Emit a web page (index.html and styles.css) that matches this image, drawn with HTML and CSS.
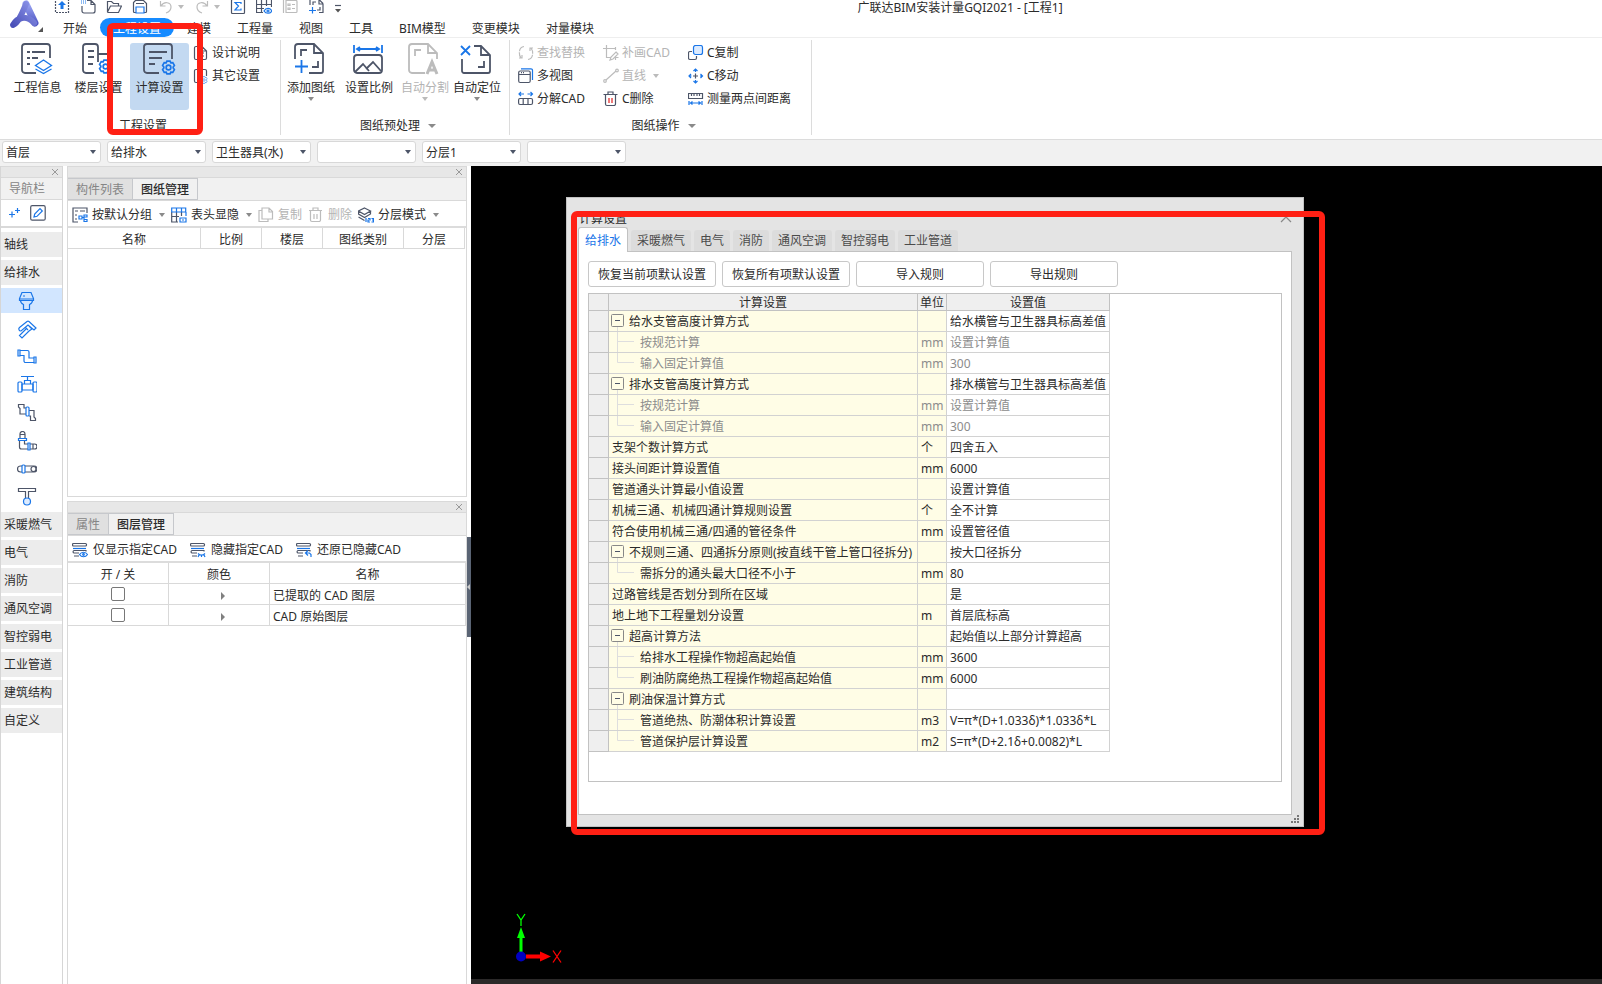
FILE: index.html
```html
<!DOCTYPE html>
<html lang="zh-CN">
<head>
<meta charset="utf-8">
<title>广联达BIM安装计量GQI2021 - [工程1]</title>
<link rel="stylesheet" href="styles.css">
</head>
<body>
<svg class="defs" aria-hidden="true">
  <symbol id="gear" viewBox="0 0 16 16"><path d="M6.300 1.200h3.400l.8 1.900 2.100-.3 1.700 3L13 7.500v1l1.300 1.700-1.700 3-2.100-.3-.8 1.900H6.300l-.8-1.900-2.100.3-1.700-3L3 8.500v-1L1.700 5.800l1.700-3 2.100.3z"/><circle cx="8" cy="8" r="2.500"/></symbol>
  <symbol id="minus" viewBox="0 0 20 20"><path class="twig" d="M8.500 16v4"/><rect class="box" x="2.500" y="3.500" width="12" height="12" rx="1"/><path d="M6 9.500h5"/></symbol>
  <symbol id="mid" viewBox="0 0 31 20"><path class="twig" d="M8.500 0v20M8.500 9.500H25"/></symbol>
  <symbol id="end" viewBox="0 0 31 20"><path class="twig" d="M8.500 0v9.500H25"/></symbol>
  <symbol id="close" viewBox="0 0 8 8"><path d="M1 1l6 6M7 1L1 7"/></symbol>
  <symbol id="rows" viewBox="0 0 16 16"><rect x=".5" y="1.500" width="14" height="2.500" rx="1"/><path class="b" d="M1 6.500h13"/><path d="M14 9.500v-1H2a1.300 1.300 0 0 0 0 2.500h5M7 14H2"/></symbol>
</svg>

<header class="top">
  <svg class="logo" viewBox="0 0 50 38">
    <defs>
      <linearGradient id="lg" x1="0" y1="1" x2="1" y2="0"><stop offset="0" stop-color="#4a50b8"/><stop offset="1" stop-color="#8d95ea"/></linearGradient>
      <linearGradient id="lh" x1="0" y1="0" x2="0" y2="1"><stop offset="0" stop-color="#9aa4f2"/><stop offset="1" stop-color="#5158c4"/></linearGradient>
    </defs>
    <path d="M26 4L35 23" stroke="url(#lh)" stroke-width="7" stroke-linecap="round" fill="none"/>
    <path d="M26 4C22 14 18 23 13 25C17 18 26 14 34 23" stroke="url(#lg)" stroke-width="6" stroke-linecap="round" stroke-linejoin="round" fill="none"/>
    <path d="M43 27v5h-5z" fill="#555"/>
  </svg>
  <div class="quick">
    <button aria-label="上传"><svg viewBox="0 2 16 14"><path stroke-dasharray="2 1" d="M1.500 0v14.500h13V0"/><path class="bf" d="M8 3l4 4H9.500v4h-3V7H4z"/></svg></button>
    <button aria-label="新建"><svg viewBox="0 2 16 14"><path d="M7 2.500h4l4 4V13a2 2 0 0 1-2 2H4a2 2 0 0 1-2-2V8M11 2.500v4h4"/><path class="b" stroke-dasharray="1 1" d="M1 3h5M1 5h5"/></svg></button>
    <button aria-label="打开"><svg viewBox="0 2 16 14"><path d="M1.500 14V3.500h4l2 2h5V8M1.500 14L4.500 8h11l-3 6.500H2z"/></svg></button>
    <button aria-label="保存"><svg viewBox="0 2 16 14"><path d="M4 14.500H2.500a1 1 0 0 1-1-1v-9l2-2h8l3 3v8a1 1 0 0 1-1 1H12M4 5.500h8"/><path class="b" d="M4 15V9h8v6z"/></svg></button>
    <button class="off drop" aria-label="撤销"><svg viewBox="0 2 16 14"><path d="M2.500 3v5h5M3 8c3-5 10-4 10 1 0 3-2 5-5 6"/></svg><i class="tri"></i></button>
    <button class="off drop" aria-label="重做"><svg viewBox="0 2 16 14"><path d="M13.500 3v5h-5M13 8C10 3 3 4 3 9c0 3 2 5 5 6"/></svg><i class="tri"></i></button>
    <button aria-label="汇总计算"><svg viewBox="0 2 16 14"><rect x="1.500" y="1.500" width="13" height="14" rx="1"/><path class="b" d="M11 6V4.500H5L8.500 8 5 12h6v-1.500"/></svg></button>
    <button aria-label="查看表格"><svg viewBox="0 2 16 14"><path d="M.5 6.500h15M.5 10.500H8M.5 1v13.500H7M5.500 1v13.500M10.500 1v7M15.500 1v8"/><path class="b" d="M8 13c2-3.500 6-3.500 8 0-2 3-6 3-8 0z"/><circle class="b" cx="12" cy="13" r="1"/></svg></button>
    <button class="off" aria-label="属性"><svg viewBox="0 2 16 14"><path d="M1.500 1v14M4 2.500h10a1 1 0 0 1 1 1v10a1 1 0 0 1-1 1H4zM6 6h2v1.500H6zM6 10h2v1.500H6zM10 6.500h3M10 10.500h3"/></svg></button>
    <button aria-label="添加图纸"><svg viewBox="0 2 16 14"><path d="M2 7V1M5 7V4h3M9 1.500h2l4 4M11 2v4h4v8.500h-4M12 9v3H9"/><path class="b" d="M1 12.500h7M4.500 9v6.500"/></svg></button>
    <button class="more" aria-label="自定义快速访问"><svg viewBox="0 0 8 12"><path d="M1 4.500h6"/><path class="df" d="M1 8h6l-3 3.500z"/></svg></button>
  </div>
  <h1>广联达BIM安装计量GQI2021 - [工程1]</h1>
  <nav class="menu" aria-label="功能区">
    <a href="#">开始</a><a href="#" class="on">工程设置</a><a href="#">建模</a><a href="#">工程量</a><a href="#">视图</a><a href="#">工具</a><a href="#">BIM模型</a><a href="#">变更模块</a><a href="#">对量模块</a>
  </nav>
</header>

<section class="ribbon">
  <div class="group">
    <div class="tools first">
      <button class="big"><svg viewBox="0 0 32 32"><path d="M15 30H4a3 3 0 0 1-3-3V4a3 3 0 0 1 3-3h22a3 3 0 0 1 3 3v11M6 9h3M11 9h13M6 15h3M11 15h6M6 21h3"/><path class="b thin" d="M22.500 17l8 5.500-8 5-8-5zM14.500 26l8 4.500 8-4.500"/></svg>工程信息</button>
      <button class="big"><svg viewBox="0 0 32 32"><path d="M12 30H4a3 3 0 0 1-3-3V4a3 3 0 0 1 3-3h9a3 3 0 0 1 3 3v15M6 8h6M6 14h6M6 21h5M16 11h15"/><use class="b" href="#gear" x="16" y="16" width="15" height="15"/></svg>楼层设置</button>
      <button class="big on"><svg viewBox="0 0 32 32"><path d="M16 30H4a3 3 0 0 1-3-3V4a3 3 0 0 1 3-3h22a3 3 0 0 1 3 3v12M6 9h18M6 15h13M6 21h6"/><use class="b" href="#gear" x="18" y="17" width="15" height="15"/></svg>计算设置</button>
      <div class="stack">
        <button class="small"><svg viewBox="0 0 16 16"><path d="M9 1.500H3a1.500 1.500 0 0 0-1.500 1.500v10A1.500 1.500 0 0 0 3 14.500h9a1.500 1.500 0 0 0 1.500-1.500V6L9 1.500V6h4.500M5 8h1M8 8h3M5 11h1M8 11h3"/></svg>设计说明</button>
        <button class="small"><svg viewBox="0 0 16 16"><path d="M7 14.500H3A1.500 1.500 0 0 1 1.500 13V3A1.500 1.500 0 0 1 3 1.500h9A1.500 1.500 0 0 1 13.500 3v5M5 5h5M5 8h3"/><use class="b" href="#gear" x="7" y="8" width="8" height="8"/></svg>其它设置</button>
      </div>
    </div>
    <p class="caption">工程设置</p>
    <div class="mark mark-ribbon"></div>
  </div>
  <div class="group">
    <div class="tools">
      <button class="big w58"><svg viewBox="0 0 32 32"><path d="M1 16V4a3 3 0 0 1 3-3h16l9 9v18a2 2 0 0 1-2 2H15M20 1v9h9M7 13V7h6M24 18v6h-6"/><path class="b" d="M1 23.500h13M7.500 17v13"/></svg>添加图纸<i class="tri"></i></button>
      <button class="big w58"><svg viewBox="0 0 32 32"><path class="b" d="M2 2v8M30 2v8M5 6h22M8 4L5 6l3 2M24 4l3 2-3 2"/><rect x="2" y="12" width="28" height="18" rx="3"/><path d="M3 29l8-8 6 7M14 26l7-7 8 9"/></svg>设置比例</button>
      <button class="big w54 off"><svg viewBox="0 0 32 32"><path d="M17 30H4a3 3 0 0 1-3-3V4a3 3 0 0 1 3-3h16l9 9v6M20 1v9h9M7 13V7h6"/><path class="heavy" d="M19 31l5-12 5 12M20.500 27h7"/></svg>自动分割<i class="tri"></i></button>
      <button class="big w50"><svg viewBox="0 0 32 32"><path d="M14 3h7l9 9v16a2 2 0 0 1-2 2H4a2 2 0 0 1-2-2V16M21 3v9h9M24 18v6h-6"/><path class="b" d="M1 3l9 9M10 3l-9 9"/></svg>自动定位<i class="tri"></i></button>
    </div>
    <p class="caption">图纸预处理<i class="tri"></i></p>
  </div>
  <div class="group">
    <div class="tools cols">
      <button class="small off"><svg viewBox="0 0 16 16"><path d="M6 1.500C1 2 0 9 3 13M1 13h3v-3M10 14.500c5-.5 6-7.500 3-11.500M15 3h-3v3" stroke-dasharray="7 1"/></svg>查找替换</button>
      <button class="small off"><svg viewBox="0 0 16 16"><path d="M3.500 0v12.500H8M0 3.500h13M12.500 2v3M13 7l2 2-5 5-3 1 1-3zM15.500 12.500h-3M12.500 11v4"/></svg>补画CAD</button>
      <button class="small"><svg viewBox="0 0 16 16"><path d="M4 6.500H2A1.500 1.500 0 0 0 .5 8v5A1.500 1.500 0 0 0 2 14.500h5A1.500 1.500 0 0 0 8.500 13v-2"/><rect class="b tint" x="5.500" y=".5" width="9" height="9" rx="2"/></svg>C复制</button>
      <button class="small"><svg viewBox="0 0 16 16"><path class="b" d="M3 .8h10a1.500 1.500 0 0 1 1.500 1.500V12"/><rect x=".7" y="3" width="11.500" height="11.500" rx="1.500"/><path d="M1 6.500h11M3 4.700h1M5 4.700h1"/></svg>多视图</button>
      <button class="small off"><svg viewBox="0 0 16 16"><path d="M3 12L13 3"/><circle cx="2" cy="13" r="1.300"/><circle cx="14" cy="2.500" r="1.300"/></svg>直线<i class="tri"></i></button>
      <button class="small"><svg viewBox="0 0 16 16"><path class="b" d="M5.500 3L7.500 1l2 2M5.500 13l2 2 2-2M3 6L1 8l2 2M12.500 6l2 2-2 2M7.500 1v3M7.500 12v3M1 8h2.500M12 8h2.500"/><path d="M7.500 5.500v5M5 8h5"/></svg>C移动</button>
      <button class="small"><svg viewBox="0 0 16 16"><path class="b" d="M1 3h5M3 1L1 3l2 2M14.500 3h-5M12.500 1l2 2-2 2"/><path d="M5 7.500H2A1.500 1.500 0 0 0 .6 9v3A1.500 1.500 0 0 0 2 13.500h11a1.500 1.500 0 0 0 1.500-1.500V9A1.500 1.500 0 0 0 13 7.500zM5.200 7.500v6M10 7.500v6"/></svg>分解CAD</button>
      <button class="small"><svg viewBox="0 0 16 16"><path d="M.5 3.500h14M5 3V1h5v2M2.500 4v9A1.500 1.500 0 0 0 4 14.500h7a1.500 1.500 0 0 0 1.500-1.500V4"/><path class="r" d="M6 7v5M9 7v5"/></svg>C删除</button>
      <button class="small"><svg viewBox="0 0 16 16"><path d="M.5 7.500v-5h14v5zM3.500 3v2M6 3v2M9 3v2M11.500 3v2"/><path class="b" d="M1 10v4M14 10v4M3 12h9M4.500 10.500L2.500 12l2 1.500M10.500 10.500l2 1.500-2 1.500"/></svg>测量两点间距离</button>
    </div>
    <p class="caption">图纸操作<i class="tri"></i></p>
  </div>
</section>

<section class="filters">
  <span class="combo"><select aria-label="楼层"><option>首层</option></select></span>
  <span class="combo"><select aria-label="专业"><option>给排水</option></select></span>
  <span class="combo"><select aria-label="构件类型"><option>卫生器具(水)</option></select></span>
  <span class="combo"><select aria-label="构件"><option></option></select></span>
  <span class="combo"><select aria-label="分层"><option>分层1</option></select></span>
  <span class="combo"><select aria-label="图纸"><option></option></select></span>
</section>

<main class="work">
  <aside class="side">
    <div class="strip"><button aria-label="关闭导航栏"><svg><use href="#close"/></svg></button></div>
    <h2>导航栏</h2>
    <div class="side-tools">
      <button aria-label="添加"><svg viewBox="0 0 16 16"><path class="b" d="M6 6.500v6M3 9.500h6M11.500 3v5M9 5.500h5"/></svg></button>
      <button aria-label="编辑"><svg viewBox="0 0 16 16"><rect x=".7" y=".7" width="14.500" height="14.500" rx="1.500"/><path class="b" d="M4 12l.7-3L10 3.700l2.300 2.300L7 11.300z"/></svg></button>
    </div>
    <nav class="tree" aria-label="专业">
      <a href="#">轴线</a>
      <a href="#">给排水</a>
      <a href="#" class="ico on" aria-label="卫生器具"><svg viewBox="0 0 20 20"><path class="b" d="M5 1.500h9l2.500 6v2h-14v-2zM3.500 9.500c0 2.500 1 3 3 4v5h6v-5c2-1 3-1.500 3-4M3 8h13"/><path class="b" d="M6 5h2"/></svg></a>
      <a href="#" class="ico" aria-label="设备"><svg viewBox="0 0 20 20"><path class="b" d="M2.500 8.500L10 2.500a2 2 0 0 1 2 0l7 6.500-2 2-6-5-7 6a2 2 0 0 1-1.500-3.500zM12 7l3 3-3 2-7 7-2.500-2.500L9 10M8 8l3 3"/></svg></a>
      <a href="#" class="ico" aria-label="管道"><svg viewBox="0 0 20 20"><path class="b" d="M1 3h2v6H1zM3 3.500h7.500a1.500 1.500 0 0 1 1.500 1.500v6h5M3 8.500h4V14a1.500 1.500 0 0 0 1.500 1.500H17M17 10h2v6h-2z"/></svg></a>
      <a href="#" class="ico" aria-label="阀门法兰"><svg viewBox="0 0 20 20"><path class="b" d="M4 1.500h13M10.500 2v3.500M7.500 9V5.500h6V9M5 9h11v6H5z"/><rect class="b" x="1" y="7" width="4" height="10" rx="1"/><rect class="b" x="16" y="7" width="4" height="10" rx="1"/></svg></a>
      <a href="#" class="ico" aria-label="管道附件"><svg viewBox="0 0 20 20"><path d="M9 5H7V1.500H1.500V4L3 5.500V11h6M12 7.500h5V14l1.500 1.500v2h-5V13H12"/><rect class="b" x="9" y="4" width="3" height="9" rx="1"/></svg></a>
      <a href="#" class="ico" aria-label="通头管件"><svg viewBox="0 0 20 20"><path d="M3 7V3a2.500 2.500 0 0 1 5 0v4M3.500 3.500h4M2.500 10v6a2 2 0 0 0 2 2H11M7.500 10v3H11M13 13h4.500a2 2 0 0 1 0 5H13M16 13v5"/><path class="b" d="M1.500 7.500h8v2h-8zM11 12h2v7h-2z"/></svg></a>
      <a href="#" class="ico" aria-label="零星构件"><svg viewBox="0 0 20 20"><path d="M5 7H3.500a3 3 0 0 0 0 6H5M8 7h9a3 3 0 0 1 0 6H8"/><circle cx="16.500" cy="10" r="2.500"/><rect class="b" x="5" y="6" width="3" height="8" rx="1"/></svg></a>
      <a href="#" class="ico" aria-label="支架"><svg viewBox="0 0 20 20"><path d="M8.500 12V4.500h-7v-3h17v3h-7V12"/><circle class="b tint" cx="10" cy="14.500" r="3.500"/></svg></a>
      <a href="#">采暖燃气</a>
      <a href="#">电气</a>
      <a href="#">消防</a>
      <a href="#">通风空调</a>
      <a href="#">智控弱电</a>
      <a href="#">工业管道</a>
      <a href="#">建筑结构</a>
      <a href="#">自定义</a>
    </nav>
  </aside>

  <div class="docks">
    <section class="dock upper">
      <div class="strip"><button aria-label="关闭图纸管理"><svg><use href="#close"/></svg></button></div>
      <div class="tabs"><button>构件列表</button><button class="on">图纸管理</button></div>
      <div class="bar">
        <button class="small"><svg viewBox="0 0 16 16"><path d="M6 15H1V1h14v5M3 4h3M8 4h5M3 8h2M3 12h2"/><path class="b" d="M7 9h3v3H7zM10 10.500h2M12 8h3v2h-3zM12 12.500h3v2h-3zM12 9v5"/></svg>按默认分组<i class="tri"></i></button>
        <button class="small"><svg viewBox="0 0 16 16"><path d="M.7 5v10H7M.7 9.500H8M5.500 5v10M10.500 5v4"/><path class="b" d="M.7 5V1h14v4zM5.500 1v4M10.500 1v4M15 5v4M9 11h6v4H9zM11 13h2"/></svg>表头显隐<i class="tri"></i></button>
        <button class="small off"><svg viewBox="0 0 16 16"><path d="M4 3.500H1v11h9V12M4 1h7l3.500 3.500V12H4zM11 1v4h4"/></svg>复制</button>
        <button class="small off"><svg viewBox="0 0 16 16"><path d="M1 3.500h13M5 3V1h5v2M2.500 4v9A1.500 1.500 0 0 0 4 14.500h7a1.500 1.500 0 0 0 1.500-1.500V4M6 7v5M9 7v5"/></svg>删除</button>
        <button class="small"><svg viewBox="0 0 16 16"><path d="M6.500 1l6 3-6 3.500-6-3.500zM.5 4v3l6 3.500L12.500 7V4M.5 10l6 3.500"/><path class="b" d="M8 11v4M10 11.500h2V13h-2v2h2M13.500 11.500h2v3.500h-2M14 13h1.500"/></svg>分层模式<i class="tri"></i></button>
      </div>
      <table class="grid sheets">
        <colgroup><col class="c133"><col class="c61"><col class="c61"><col class="c81"><col class="c61"></colgroup>
        <thead><tr><th>名称</th><th>比例</th><th>楼层</th><th>图纸类别</th><th>分层</th></tr></thead>
      </table>
    </section>
    <section class="dock lower">
      <div class="strip"><button aria-label="关闭图层管理"><svg><use href="#close"/></svg></button></div>
      <div class="tabs"><button>属性</button><button class="on">图层管理</button></div>
      <div class="bar layers">
        <button class="small"><svg viewBox="0 0 16 16"><use href="#rows"/><path class="b" d="M7.500 12.500c2-3 6-3 8 0-2 3-6 3-8 0z"/><circle class="b" cx="11.500" cy="12.500" r=".8"/></svg>仅显示指定CAD</button>
        <button class="small"><svg viewBox="0 0 16 16"><use href="#rows"/><path class="b" d="M8 11.500c2 2 5 2 7 0M9 13l-1 2M11.500 13v2M14 13l1 2"/></svg>隐藏指定CAD</button>
        <button class="small"><svg viewBox="0 0 16 16"><use href="#rows"/><path class="b" d="M12 8.500L9.500 11l2.500 2.500M10 11h3.500l1.500 1.500V15"/></svg>还原已隐藏CAD</button>
      </div>
      <table class="grid cad">
        <colgroup><col class="c101"><col class="c101"><col></colgroup>
        <thead><tr><th>开 / 关</th><th>颜色</th><th>名称</th></tr></thead>
        <tbody>
          <tr><td><input type="checkbox" aria-label="已提取的 CAD 图层"></td><td><i class="play"></i></td><td>已提取的 CAD 图层</td></tr>
          <tr><td><input type="checkbox" aria-label="CAD 原始图层"></td><td><i class="play"></i></td><td>CAD 原始图层</td></tr>
        </tbody>
      </table>
    </section>
  </div>
  <div class="split"><button aria-label="收起面板"><i></i></button></div>

  <section class="canvas">
    <svg class="axis" viewBox="0 0 50 52">
      <path d="M9 14l4 11h-2.500v14h-3V25H5z" fill="#0f0"/><path d="M14 41.500h14v-3l11 5-11 5v-3H14z" fill="#f00"/><circle cx="9" cy="43.500" r="5" fill="#0000c0"/>
      <path d="M5 1l4 6 4-6M9 7v6" stroke="#0f0"/><path d="M41 37.500l8 12M49 37.500l-8 12" stroke="#f00"/>
    </svg>
    <div class="dialog" role="dialog" aria-label="计算设置">
      <div class="title"><h2>计算设置</h2><button aria-label="关闭"><svg viewBox="0 0 12 12"><path d="M1 1l10 10M11 1L1 11"/></svg></button></div>
      <div class="dtabs"><button class="on">给排水</button><button>采暖燃气</button><button>电气</button><button>消防</button><button>通风空调</button><button>智控弱电</button><button>工业管道</button></div>
      <div class="pane">
        <div class="actions"><button>恢复当前项默认设置</button><button>恢复所有项默认设置</button><button>导入规则</button><button>导出规则</button></div>
        <div class="frame">
          <table class="rules">
            <colgroup><col class="c20"><col class="c309"><col class="c29"><col class="c163"></colgroup>
            <thead><tr><th></th><th>计算设置</th><th>单位</th><th>设置值</th></tr></thead>
            <tbody>
              <tr><th></th><td><svg class="node"><use href="#minus"/></svg>给水支管高度计算方式</td><td></td><td>给水横管与卫生器具标高差值</td></tr>
              <tr class="dim"><th></th><td><svg class="leaf"><use href="#mid"/></svg>按规范计算</td><td>mm</td><td>设置计算值</td></tr>
              <tr class="dim"><th></th><td><svg class="leaf"><use href="#end"/></svg>输入固定计算值</td><td>mm</td><td>300</td></tr>
              <tr><th></th><td><svg class="node"><use href="#minus"/></svg>排水支管高度计算方式</td><td></td><td>排水横管与卫生器具标高差值</td></tr>
              <tr class="dim"><th></th><td><svg class="leaf"><use href="#mid"/></svg>按规范计算</td><td>mm</td><td>设置计算值</td></tr>
              <tr class="dim"><th></th><td><svg class="leaf"><use href="#end"/></svg>输入固定计算值</td><td>mm</td><td>300</td></tr>
              <tr><th></th><td class="flat">支架个数计算方式</td><td>个</td><td>四舍五入</td></tr>
              <tr><th></th><td class="flat">接头间距计算设置值</td><td>mm</td><td>6000</td></tr>
              <tr><th></th><td class="flat">管道通头计算最小值设置</td><td></td><td>设置计算值</td></tr>
              <tr><th></th><td class="flat">机械三通、机械四通计算规则设置</td><td>个</td><td>全不计算</td></tr>
              <tr><th></th><td class="flat">符合使用机械三通/四通的管径条件</td><td>mm</td><td>设置管径值</td></tr>
              <tr><th></th><td><svg class="node"><use href="#minus"/></svg>不规则三通、四通拆分原则(按直线干管上管口径拆分)</td><td></td><td>按大口径拆分</td></tr>
              <tr><th></th><td><svg class="leaf"><use href="#end"/></svg>需拆分的通头最大口径不小于</td><td>mm</td><td>80</td></tr>
              <tr><th></th><td class="flat">过路管线是否划分到所在区域</td><td></td><td>是</td></tr>
              <tr><th></th><td class="flat">地上地下工程量划分设置</td><td>m</td><td>首层底标高</td></tr>
              <tr><th></th><td><svg class="node"><use href="#minus"/></svg>超高计算方法</td><td></td><td>起始值以上部分计算超高</td></tr>
              <tr><th></th><td><svg class="leaf"><use href="#mid"/></svg>给排水工程操作物超高起始值</td><td>mm</td><td>3600</td></tr>
              <tr><th></th><td><svg class="leaf"><use href="#end"/></svg>刷油防腐绝热工程操作物超高起始值</td><td>mm</td><td>6000</td></tr>
              <tr><th></th><td><svg class="node"><use href="#minus"/></svg>刷油保温计算方式</td><td></td><td></td></tr>
              <tr><th></th><td><svg class="leaf"><use href="#mid"/></svg>管道绝热、防潮体积计算设置</td><td>m3</td><td>V=π*(D+1.033δ)*1.033δ*L</td></tr>
              <tr><th></th><td><svg class="leaf"><use href="#end"/></svg>管道保护层计算设置</td><td>m2</td><td>S=π*(D+2.1δ+0.0082)*L</td></tr>
            </tbody>
          </table>
        </div>
      </div>
      <div class="grip"><svg viewBox="0 0 9 9"><path d="M6 0h2v2H6zM3 3h2v2H3zM6 3h2v2H6zM0 6h2v2H0zM3 6h2v2H3zM6 6h2v2H6z"/></svg></div>
      <div class="mark mark-dialog"></div>
    </div>
  </section>
</main>
</body>
</html>
```
FILE: styles.css
```css
* { box-sizing: border-box; }
body {
  margin: 0;
  min-height: 100vh;
  display: flex;
  flex-direction: column;
  background: #fff;
  color: #2b2b2b;
  font: 12px/16px "Noto Sans", "Noto Sans CJK SC", sans-serif;
}
h1, h2, p { margin: 0; font: inherit; }
a { color: inherit; text-decoration: none; }
button, select, input { font: inherit; color: inherit; margin: 0; padding: 0; }
button { border: 0; background: none; white-space: nowrap; }
svg { fill: none; stroke: #4d5568; stroke-width: 1.2; flex: none; display: block; }
.defs { position: absolute; width: 0; height: 0; }
.b { stroke: #1a76e8; }
.r { stroke: #e02020; }
.bf { fill: #1a76e8; stroke: none; }
.df { fill: #555; stroke: none; }
.tint { fill: #dcebff; }
.off { color: #b4b4b4; }
.off svg { stroke: #bcbcbc; }
.tri {
  flex: none;
  width: 0;
  border: 3px solid transparent;
  border-top: 4px solid #8a8a8a;
  border-bottom: 0;
}
.off .tri { border-top-color: #bbb; }

/* Title row and menu */
.top {
  display: grid;
  grid-template: 18px 19px / 50px 296px 1fr;
  border-bottom: 1px solid #eee;
  height: 38px;
}
.logo { grid-row: 1 / 3; width: 50px; height: 38px; stroke: none; }
.quick { display: flex; gap: 10px; padding-left: 4px; }
.quick button { height: 14px; }
.quick svg { width: 16px; height: 14px; }
.quick .drop { display: flex; align-items: center; gap: 4px; width: 26px; }
.quick .more svg { width: 8px; height: 12px; }
.top h1 { text-align: center; padding-right: 28px; }
.menu { grid-column: 2 / 4; display: flex; align-items: center; }
.menu a { padding: 1px 13px 0; height: 19px; line-height: 19px; border-radius: 10px; }
.menu .on { background: #168bff; color: #fff; }

/* Ribbon */
.ribbon { display: flex; height: 102px; padding-top: 2px; border-bottom: 1px solid #dcdcdc; }
.group {
  position: relative;
  display: flex;
  flex-direction: column;
  justify-content: space-between;
  margin-bottom: 4px;
  border-right: 1px solid #dcdcdc;
}
.tools { display: flex; padding: 3px 7px 0 1px; }
.tools.first { gap: 2px; padding: 3px 20px 0 8px; }
.big {
  display: flex;
  flex-direction: column;
  align-items: center;
  width: 59px;
  height: 67px;
  border-radius: 3px;
}
.big svg { width: 32px; height: 32px; stroke-width: 1.8; margin: 0 2px 5px 0; overflow: visible; }
.big .thin { stroke-width: 1.3; }
.big .heavy { stroke-width: 3; }
.big .tri { margin-top: 1px; }
.big.on { background: #c3d9f1; }
.w58 { width: 58px; }
.w54 { width: 54px; }
.w50 { width: 50px; }
.stack { display: flex; flex-direction: column; gap: 7px; padding: 2px 0 0 2px; }
.small { display: flex; align-items: center; gap: 3px; height: 16px; }
.small svg { width: 16px; height: 16px; }
.small .tri { margin-left: 4px; }
.cols {
  display: grid;
  grid-template-columns: 85px 85px 1fr;
  gap: 7px 0;
  padding: 5px 20px 0 8px;
}
.caption {
  display: flex;
  align-items: center;
  justify-content: center;
  gap: 8px;
  padding: 0 0 1px 6px;
}
.caption .tri { border-width: 4px 4px 0; }
.mark { position: absolute; border: 6px solid #ff2014; border-radius: 6px; pointer-events: none; }
.mark-ribbon { left: 107px; right: 77px; top: -17px; bottom: 0; }

/* Filter row */
.filters { display: flex; gap: 6px; padding: 1px 2px 3px; background: #f1f1f1; }
.combo { display: flex; align-items: center; width: 99px; }
.combo select {
  appearance: none;
  width: 100%;
  height: 22px;
  padding: 2px 3px 0;
  border: 1px solid #d8d8d8;
  border-radius: 3px;
  background: #fff;
}
.combo::after {
  content: "";
  margin-left: -11px;
  border: 3px solid transparent;
  border-top: 4px solid #4d5568;
  border-bottom: 0;
  pointer-events: none;
}

/* Work area */
.work { flex: 1; display: flex; }
.strip {
  display: flex;
  justify-content: flex-end;
  align-items: center;
  height: 12px;
  padding-right: 3px;
  background: #e7e7e7;
  border: solid #d9d9d9;
  border-width: 1px 0;
}
.strip svg { width: 8px; height: 8px; stroke: #999; stroke-width: 1; }
.side { width: 63px; border: solid #d6d6d6; border-width: 0 1px; }
.side h2 { padding: 3px 8px; height: 22px; color: #858585; background: #f1f1f1; border-bottom: 1px solid #d9d9d9; }
.side-tools { display: flex; align-items: center; gap: 8px; padding: 0 5px; height: 28px; border-bottom: 2px solid #d9d9d9; }
.side-tools svg { width: 16px; height: 16px; }
.tree { display: flex; flex-direction: column; gap: 3px; padding-top: 4px; }
.tree a { height: 25px; padding: 0 3px; line-height: 25px; background: #ececec; }
.tree .ico { display: flex; align-items: center; padding: 0 16px; background: #fff; }
.tree .ico.on { background: #d2e6ff; }
.tree .ico svg { width: 20px; height: 20px; }

.docks { width: 400px; margin-left: 4px; display: flex; flex-direction: column; gap: 4px; }
.dock { border: 1px solid #d9d9d9; border-top: 0; }
.upper { height: 331px; }
.lower { flex: 1; border-bottom: 0; }
.tabs { display: flex; height: 23px; background: #f1f1f1; border-bottom: 1px solid #d9d9d9; }
.tabs button { padding: 2px 8px 0; background: #e0e0e0; color: #858585; border: 1px solid #c6c8cc; border-left-width: 0; }
.tabs .on { background: #f1f1f1; color: #2b2b2b; font-weight: 500; }
.bar { display: flex; align-items: center; gap: 6px; height: 27px; padding: 3px 4px 0; border-bottom: 2px solid #dcdcdc; }
.bar .small { gap: 4px; }
.bar .tri { margin-left: 3px; }
.layers { gap: 13px; }
.layers .small { gap: 5px; }
.grid { border-collapse: separate; border-spacing: 0; table-layout: fixed; }
.grid th, .grid td { padding: 4px 0 0; height: 21px; font-weight: 400; border: solid #d9d9d9; border-width: 0 1px 1px 0; }
.sheets { width: 397px; }
.cad { width: 100%; }
.cad td { padding-top: 3px; text-align: center; }
.cad td:last-child { text-align: left; padding: 4px 0 0 3px; }
.cad td:first-child { padding-top: 0; }
.cad input {
  appearance: none;
  display: block;
  width: 14px;
  height: 14px;
  margin: 0 auto;
  border: 1px solid #777;
  border-radius: 2px;
  background: #fff;
}
.play { display: inline-block; margin-left: 7px; border: 4px solid transparent; border-left-color: #808080; border-right: 0; }
.c133 { width: 133px; }
.c101 { width: 101px; }
.c81 { width: 81px; }
.c61 { width: 61px; }
.split { width: 4px; padding-top: 371px; }
.split button { display: flex; align-items: center; width: 4px; height: 100px; background: #5a6474; }
.split i { border: 3px solid transparent; border-right-color: #ccc; border-left: 0; }

/* Drawing canvas */
.canvas { position: relative; flex: 1; background: #000; border-bottom: 5px solid #2b2929; }
.axis { position: absolute; left: 41px; bottom: 14px; width: 50px; height: 52px; stroke: none; stroke-width: 1.3; }
.dialog {
  position: absolute;
  left: 95px;
  right: 298px;
  top: 31px;
  padding: 0 11px;
  background: #e4e4e4;
  border: 1px solid #c2c2c2;
}
.title { display: flex; justify-content: space-between; padding: 13px 0 0 1px; }
.title svg { width: 12px; height: 12px; margin-top: -4px; stroke: #888; }
.dtabs { display: flex; align-items: flex-end; gap: 3px; margin-bottom: -1px; }
.dtabs button { height: 21px; padding: 1px 6px 0; border-radius: 3px 3px 0 0; background: #dcdcdc; color: #4a4a4a; margin-bottom: 1px; }
.dtabs .on { height: 25px; margin: 0; background: #fff; color: #1a76e8; border: 1px solid #c2c2c2; border-bottom: 0; }
.pane { padding: 9px 9px 32px; background: #fff; border: 1px solid #c2c2c2; }
.actions { display: flex; gap: 6px; margin-bottom: 6px; }
.actions button { width: 128px; height: 26px; padding-top: 2px; border: 1px solid #c8c8c8; border-radius: 3px; background: #fff; }
.frame { padding-bottom: 29px; border: 1px solid #c2c2c2; }
.rules { width: 521px; border-collapse: separate; border-spacing: 0; table-layout: fixed; }
.rules th, .rules td { padding: 2px 0 0; font-weight: 400; border: solid #d2d2d2; border-width: 0 1px 1px 0; white-space: nowrap; }
.rules th { background: #efefef; border-color: #c2c2c2; }
.rules thead th { height: 17px; line-height: 14px; }
.rules td { height: 21px; line-height: 18px; background: #fffde6; padding-left: 3px; }
.rules td:last-child { background: #fff; }
.rules td:nth-child(2) { padding-left: 0; }
.rules td.flat:nth-child(2) { padding-left: 3px; }
.rules .dim { color: #8c8c8c; }
.rules svg { float: left; height: 20px; margin-top: -2px; stroke-width: 1; }
.node { width: 20px; }
.leaf { width: 31px; }
.twig { stroke: #dedede; }
.box { stroke: #888; }
.c20 { width: 20px; }
.c309 { width: 309px; }
.c29 { width: 29px; }
.c163 { width: 163px; }
.grip { display: flex; justify-content: flex-end; height: 11px; margin-right: -8px; }
.grip svg { width: 9px; height: 9px; fill: #777; stroke: none; }
.mark-dialog { left: 4px; right: -22px; top: 13px; bottom: -9px; }
```
